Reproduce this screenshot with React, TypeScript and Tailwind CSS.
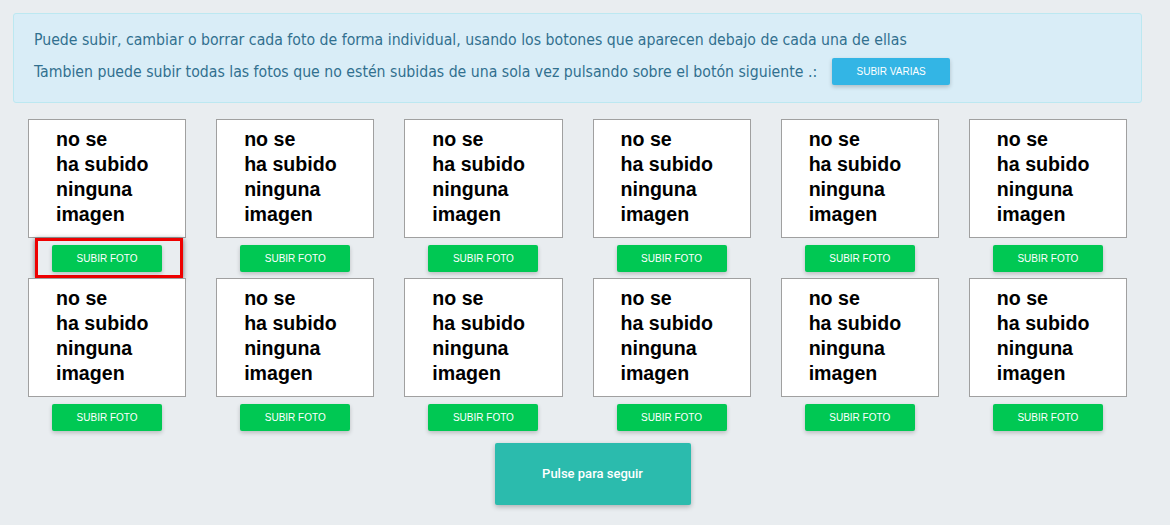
import React from 'react'

const fotos = Array.from({ length: 12 }, (_, i) => i)

function Foto({ marcado }: { marcado: boolean }) {
  return (
    <div className="flex flex-col items-center px-[15px]">
      <div className="w-full h-[119px] bg-white border border-[#a0a0a0] pl-[27px] pt-[7px] font-['Liberation_Sans',Arial,sans-serif] font-bold text-[19.6px] leading-[25px] text-black">
        no se
        <br />
        ha subido
        <br />
        ninguna
        <br />
        imagen
      </div>
      <div
        className={`flex items-center h-[40px] ${
          marcado
            ? 'ml-[4px] w-[148px] justify-start pl-[14px] border-[3px] border-[#ee0000] shadow-[0_1px_5px_rgba(0,0,0,0.55)]'
            : 'justify-center'
        }`}
      >
        <button className="w-[110px] h-[27px] bg-[#00c853] rounded-[2px] text-white text-[10px] uppercase font-['Liberation_Sans',Arial,sans-serif] shadow-[0_2px_4px_rgba(0,0,0,0.2)]">
          Subir foto
        </button>
      </div>
    </div>
  )
}

export default function App() {
  return (
    <div className="min-h-[525px] bg-[#e9edf0] pt-[13px] px-[13px]">
      <div className="w-[1129px] h-[90px] bg-[#d9edf7] border border-[#bce8f1] rounded-[3px] pl-[20px] pt-[16px] text-[#31708f] font-['DejaVu_Sans_Condensed','DejaVu_Sans',sans-serif] text-[15.7px]">
        <p className="leading-[20px]">
          Puede subir, cambiar o borrar cada foto de forma individual, usando los botones que aparecen debajo de cada una de ellas
        </p>
        <p className="leading-[20px] mt-[8px] flex items-center">
          <span>Tambien puede subir todas las fotos que no estén subidas de una sola vez pulsando sobre el botón siguiente .:</span>
          <button className="ml-[15px] w-[118px] h-[27px] bg-[#33b5e5] rounded-[2px] text-white text-[10px] uppercase font-['Liberation_Sans',Arial,sans-serif] shadow-[0_2px_4px_rgba(0,0,0,0.2)]">
            Subir varias
          </button>
        </p>
      </div>
      <div className="w-[1129px] grid grid-cols-6 mt-[16px]">
        {fotos.map((i) => (
          <Foto key={i} marcado={i === 0} />
        ))}
      </div>
      <div className="flex justify-center mt-[6px] w-[1129px]">
        <button className="ml-[30px] w-[196px] h-[62px] bg-[#2bbbad] rounded-[2px] text-white text-[13px] font-medium font-['Roboto',sans-serif] shadow-[0_2px_5px_rgba(0,0,0,0.25)]">
          Pulse para seguir
        </button>
      </div>
    </div>
  )
}
